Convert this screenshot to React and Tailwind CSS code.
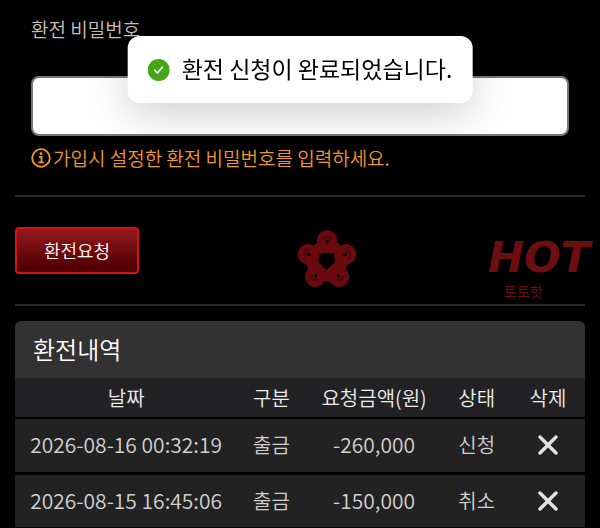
import { useState } from 'react'
import { X } from 'lucide-react'

const rows = [
  { id: 1, date: '2026-08-16 00:32:19', type: '출금', amount: '-260,000', status: '신청' },
  { id: 2, date: '2026-08-15 16:45:06', type: '출금', amount: '-150,000', status: '취소' },
]

const lobes = [0, 72, 144, 216, 288]

function Toast() {
  return (
    <div
      role="status"
      className="fixed top-9 left-1/2 -translate-x-1/2 flex items-center gap-3 h-[67px] px-5 rounded-xl bg-white text-black whitespace-nowrap shadow-[0_12px_40px_rgba(0,0,0,0.18)]"
    >
      <svg viewBox="0 0 22 22" className="w-[22px] h-[22px] shrink-0" aria-hidden="true">
        <circle cx="11" cy="11" r="11" fill="#46a716" />
        <path d="M7 11.2l2.8 2.9 5-6" fill="none" stroke="#fff" strokeWidth="1.6" strokeLinecap="round" strokeLinejoin="round" />
      </svg>
      <span className="pb-1 text-[23px] leading-8 font-normal">환전 신청이 완료되었습니다.</span>
    </div>
  )
}

function InfoIcon() {
  return (
    <svg viewBox="0 0 20 20" className="w-5 h-5 shrink-0" aria-hidden="true">
      <circle cx="10" cy="10" r="8.8" fill="none" stroke="#f79a22" strokeWidth="1.8" />
      <circle cx="10" cy="5.7" r="1.4" fill="#f79a22" />
      <path d="M7.8 8.9h2.7v5.3M7.4 14.3h5.4" fill="none" stroke="#f79a22" strokeWidth="1.8" />
    </svg>
  )
}

function KnotLogo() {
  return (
    <svg viewBox="0 0 58 58" className="w-[58px] h-[58px] mt-4 shrink-0" aria-hidden="true">
      {lobes.map((angle) => (
        <circle key={angle} cx="29" cy="10.5" r="10.2" fill="#6a0a0f" transform={`rotate(${angle} 29 30.5)`} />
      ))}
      <path d="M29 5L53 23L44 51.5H14L5 23Z" fill="#6a0a0f" />
      {/* darker crossings and the small eye of each lobe */}
      {lobes.map((angle) => (
        <g key={angle} transform={`rotate(${angle} 29 30.5)`}>
          <path d="M25 9a5 5 0 0 1 8.5 1" fill="none" stroke="#500a10" strokeWidth="3.5" />
          <path d="M27.3 10h3.4l-1.1 3.4h-1.2z" fill="#000" />
        </g>
      ))}
      {/* pentagon opening */}
      <path d="M22 23L20 32L28.5 40L37 32L35.5 23Z" fill="#000" />
    </svg>
  )
}

export default function App() {
  const [password, setPassword] = useState('')

  return (
    <div className="min-h-screen bg-black px-[15px] pt-[15px] font-['Noto_Sans_CJK_KR',sans-serif] font-[350] text-[#d0d0d0]">
      <Toast />

      <form onSubmit={(e) => e.preventDefault()}>
        <div className="px-4">
          <label htmlFor="password" className="block text-[19px] leading-7 text-[#c8c0b8]">
            환전 비밀번호
          </label>
          <input
            id="password"
            type="password"
            value={password}
            onChange={(e) => setPassword(e.target.value)}
            className="block w-full h-[60px] mt-[33px] px-4 rounded-lg border-2 border-[#777] bg-white text-black text-xl outline-none"
          />
          <p className="flex items-center gap-0.5 mt-2 text-[19px] leading-7 text-[#f0962a]">
            <InfoIcon />
            가입시 설정한 환전 비밀번호를 입력하세요.
          </p>
        </div>

        <div className="flex items-center h-[111px] mt-[23px] border-y-2 border-[#282828]">
          <button
            type="submit"
            className="w-[124px] h-[47px] pb-0.5 rounded-sm border-2 border-[#d0141a] bg-linear-to-b from-[#941a1e] to-[#4c0002] text-lg leading-6 text-white"
          >
            환전요청
          </button>
          <div className="flex-[6]" />
          <KnotLogo />
          <div className="flex-[5]" />
          <div className="w-[106px] -mr-[9px] pt-10 text-[#6c0e12]">
            <div className="font-['DejaVu_Sans'] font-bold italic text-[43px] leading-10">HOT</div>
            <div className="pl-4 text-sm leading-7 font-normal">토토핫</div>
          </div>
        </div>
      </form>

      <section className="mt-[15px]">
        <h2 className="h-[57px] px-[18px] rounded-t-md bg-[#323232] text-2xl leading-[55px] text-white">
          환전내역
        </h2>
        <table className="w-full table-fixed text-center text-xl leading-7">
          <thead>
            <tr className="h-10 bg-[#222224] border-b-2 border-black text-[#ececec]">
              <th className="w-[39%] font-[350]">날짜</th>
              <th className="w-[12%] font-[350]">구분</th>
              <th className="w-[24%] font-[350]">요청금액(원)</th>
              <th className="w-[12%] font-[350]">상태</th>
              <th className="w-[13%] font-[350]">삭제</th>
            </tr>
          </thead>
          <tbody>
            {rows.map((row) => (
              <tr key={row.id} className="h-[55px] bg-[#222] border-b-3 border-black">
                <td className="pb-0.5 text-[21px]">{row.date}</td>
                <td>{row.type}</td>
                <td className="pb-0.5 text-[21px]">{row.amount}</td>
                <td>{row.status}</td>
                <td>
                  <button type="button" aria-label="삭제" className="block mx-auto text-[#e2e2e2]">
                    <X size={32} strokeWidth={2.6} />
                  </button>
                </td>
              </tr>
            ))}
          </tbody>
        </table>
      </section>
    </div>
  )
}
